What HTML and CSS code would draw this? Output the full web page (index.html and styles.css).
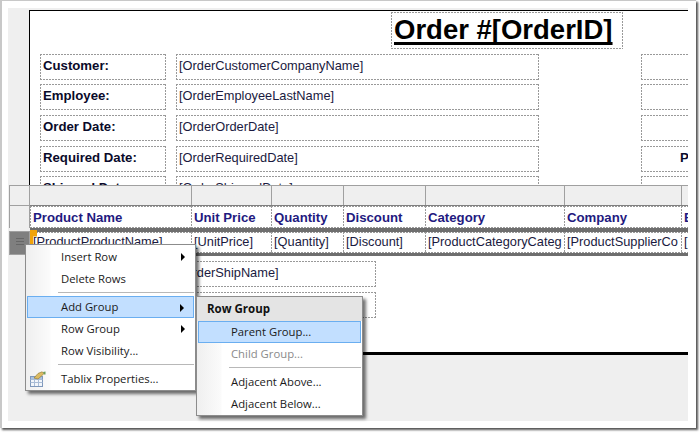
FILE: index.html
```html
<!DOCTYPE html>
<html lang="en">
<head>
<meta charset="utf-8">
<title>Order report designer</title>
<link rel="stylesheet" href="styles.css">
</head>
<body>
<div class="frame">
  <div class="canvas">
    <div class="page">
      <div class="title-row"><div class="title dash">Order #[OrderID]</div></div>
      <div class="fields">
        <div class="label dash">Customer:</div><div class="value dash">[OrderCustomerCompanyName]</div><div class="extra dash"></div>
        <div class="label dash">Employee:</div><div class="value dash">[OrderEmployeeLastName]</div><div class="extra dash"></div>
        <div class="label dash">Order Date:</div><div class="value dash">[OrderOrderDate]</div><div class="extra dash"></div>
        <div class="label dash">Required Date:</div><div class="value dash">[OrderRequiredDate]</div><div class="extra dash"><span class="clip-label">P</span></div>
        <div class="label dash">Shipped Date:</div><div class="value dash">[OrderShippedDate]</div><div class="extra dash"></div>
      </div>
      <div class="ship-fields">
        <div class="ship dash">[OrderShipName]</div>
        <div class="ship dash"></div>
      </div>
    </div>
  </div>

  <div class="tablix">
    <div class="t-row t-head">
      <div class="t-handle"></div>
      <div class="t-col c1"></div><div class="t-col c2"></div><div class="t-col c3"></div><div class="t-col c4"></div><div class="t-col c5"></div><div class="t-col c6"></div><div class="t-col c7"></div>
    </div>
    <div class="t-row t-titles">
      <div class="t-handle"></div>
      <div class="t-cell dash c1">Product Name</div><div class="t-cell dash c2">Unit Price</div><div class="t-cell dash c3">Quantity</div><div class="t-cell dash c4">Discount</div><div class="t-cell dash c5">Category</div><div class="t-cell dash c6">Company</div><div class="t-cell dash c7">E</div>
    </div>
    <div class="t-row t-data">
      <div class="t-handle selected"><span></span><span></span><span></span></div>
      <div class="t-band">
        <div class="t-cell dash c1">[ProductProductName]</div><div class="t-cell dash c2">[UnitPrice]</div><div class="t-cell dash c3">[Quantity]</div><div class="t-cell dash c4">[Discount]</div><div class="t-cell dash c5">[ProductCategoryCateg</div><div class="t-cell dash c6">[ProductSupplierCo</div><div class="t-cell dash c7">[</div>
      </div>
      <div class="marker"></div>
    </div>
  </div>

  <div class="menu menu-main">
    <div class="item arrow">Insert Row</div>
    <div class="item">Delete Rows</div>
    <div class="sep"></div>
    <div class="item arrow active">Add Group</div>
    <div class="item arrow">Row Group</div>
    <div class="item">Row Visibility...</div>
    <div class="sep"></div>
    <div class="item">
      <svg class="item-icon" viewBox="0 0 17 16" width="17" height="16" aria-hidden="true">
        <rect x="0.5" y="5.5" width="12" height="10" fill="#f2f6fb" stroke="#7f98bb"/>
        <rect x="1" y="6" width="11" height="2" fill="#a9c3e2"/>
        <path d="M0.5 8.5h12M0.5 11.5h12M4.5 6v9M8.5 6v9" stroke="#a9bcd6" fill="none"/>
        <path d="M4 7 8 2.5 12 0.8 14 2.5 11 5.5 8 8Z" fill="#dcbb62" stroke="#9a8038" stroke-width=".7"/>
        <path d="M13 1 15.5 0.5 15.5 3.5 14 3.5Z" fill="#6d9c58"/>
      </svg>
      Tablix Properties...
    </div>
  </div>

  <div class="menu menu-sub">
    <div class="menu-title">Row Group</div>
    <div class="item active">Parent Group...</div>
    <div class="item disabled">Child Group...</div>
    <div class="sep"></div>
    <div class="item">Adjacent Above...</div>
    <div class="item">Adjacent Below...</div>
  </div>
</div>
</body>
</html>
```
FILE: styles.css
```css
* { box-sizing: border-box; }
html, body { margin: 0; padding: 0; background: #fff; overflow: hidden; }
body { width: 700px; height: 433px; font-family: "Liberation Sans", Arial, sans-serif; }

.frame {
  position: relative;
  width: 696px;
  height: 428px;
  padding: 8px 8px 7px 8px;
  background: #fff;
  box-shadow: inset 2px 1px 0 #c8c8c8, 2px 2px 2px #555;
}
.canvas {
  height: 413px;
  padding: 2px 0 0 21px;
  background: #efefef;
}
.page {
  height: 345px;
  background: #fff;
  border-top: 1px solid #000;
  border-left: 1px solid #000;
  border-bottom: 3px solid #000;
  overflow: hidden;
}

.dash {
  background-image:
    repeating-linear-gradient(90deg, #999 0 2px, transparent 2px 3px),
    repeating-linear-gradient(90deg, #999 0 2px, transparent 2px 3px),
    repeating-linear-gradient(180deg, #999 0 2px, transparent 2px 3px),
    repeating-linear-gradient(180deg, #999 0 2px, transparent 2px 3px);
  background-size: 100% 1px, 100% 1px, 1px 100%, 1px 100%;
  background-position: left top, left bottom, left top, right top;
  background-repeat: no-repeat;
}

.title-row { padding: 1px 0 0 361px; height: 43px; }
.title {
  width: 232px;
  height: 37px;
  padding: 1px 0 0 3px;
  font-size: 27.5px;
  line-height: 33px;
  font-weight: 700;
  color: #000;
  text-decoration: underline;
  text-decoration-thickness: 3px;
  text-underline-offset: 3px;
  text-decoration-skip-ink: none;
  white-space: nowrap;
}

.fields {
  display: grid;
  grid-template-columns: 126px 363px 47px;
  column-gap: 10px;
  grid-template-rows: 25px 26px 26px 25px 26px;
  row-gap: 5px;
  padding-left: 10px;
  width: 680px;
}
.fields > * { height: 26px; }
.fields .extra { margin-left: 92px; width: 60px; }
.label, .value, .extra, .ship { padding-left: 3px; line-height: 24px; white-space: nowrap; overflow: hidden; }
.label { font-size: 13.2px; font-weight: 700; color: #0a0a2a; }
.value, .ship { font-size: 12.8px; color: #1a1a40; }
.clip-label { display: block; padding-left: 36px; font-size: 13.2px; font-weight: 700; color: #0a0a2a; }

.ship-fields {
  display: flex;
  flex-direction: column;
  gap: 5px;
  margin: 59px 0 0 146px;
  width: 200px;
}
.ship { height: 26px; line-height: 23px; }

.tablix {
  position: absolute;
  left: 9px;
  top: 185px;
  width: 679px;
  height: 71px;
  overflow: hidden;
}
.t-row { display: flex; position: relative; }
.t-handle {
  flex: 0 0 21px;
  background: #efefef;
  border: 1px solid #a0a0a0;
  border-width: 0 1px 0 1px;
}
.t-head { height: 21px; background: #efefef; }
.t-head .t-handle { border-width: 1px; }
.t-col {
  border: 1px solid #a0a0a0;
  border-left: 0;
  border-bottom-color: #808080;
  margin-right: -1px;
}
.c1 { flex: 0 0 162px; }
.c2 { flex: 0 0 81px; }
.c3 { flex: 0 0 73px; }
.c4 { flex: 0 0 83px; }
.c5 { flex: 0 0 140px; }
.c6 { flex: 0 0 118px; }
.c7 { flex: 0 0 30px; }

.t-titles { height: 22px; background: #fff; }
.t-titles .t-cell {
  margin-right: -1px;
  padding-left: 3px;
  font-size: 13.2px;
  font-weight: 700;
  line-height: 23px;
  color: #1f1a80;
  white-space: nowrap;
  overflow: hidden;
}
.t-data { height: 28px; background: linear-gradient(90deg, #efefef 21px, #fff 21px); }
.t-band {
  display: flex;
  flex: 1 1 auto;
  height: 28px;
  border-top: 4px solid #6e6e6e;
  border-bottom: 3px solid #6e6e6e;
}
.t-band .t-cell {
  margin-right: -1px;
  height: 21px;
  padding-left: 3px;
  font-size: 12.8px;
  line-height: 20px;
  color: #1a1a40;
  white-space: nowrap;
  overflow: hidden;
}
.t-handle.selected {
  height: 24px;
  margin-top: 3px;
  padding: 6px 5px 0 6px;
  background: #7f7f7f;
  border: 1px solid #a0a0a0;
  display: flex;
  flex-direction: column;
  gap: 2px;
}
.t-handle.selected span { display: block; height: 1px; background: #666; }
.marker {
  position: absolute;
  left: 21px;
  top: 2px;
  width: 7px;
  height: 16px;
  background: #f0a30a;
  clip-path: polygon(0 0, 100% 0, 100% 40%, 45% 40%, 45% 100%, 0 100%);
}

.menu {
  position: absolute;
  background: linear-gradient(90deg, #efefef, #fbfbfb 24px, #fff 25px);
  border: 1px solid #8c8c8c;
  box-shadow: 3px 3px 3px rgba(0, 0, 0, .55);
  font-family: "Open Sans", "Noto Sans", sans-serif;
  font-size: 11.3px;
  color: #1a1a1a;
}
.menu-main { left: 25px; top: 244px; width: 171px; height: 147px; padding: 1px; }
.menu-sub { left: 196px; top: 296px; width: 167px; height: 120px; padding: 0 1px; }
.item {
  position: relative;
  height: 22px;
  padding-left: 34px;
  line-height: 21px;
  white-space: nowrap;
}
.menu-sub .item { padding-left: 33px; }
.menu-sub .item.active { padding-left: 32px; }
.item.active {
  background: #c2dfff;
  border: 1px solid #6aaef0;
  line-height: 19px;
  padding-left: 33px;
}
.arrow::after {
  content: "";
  position: absolute;
  right: 9px;
  top: 7px;
  border-left: 4px solid #000;
  border-top: 4px solid transparent;
  border-bottom: 4px solid transparent;
}
.item.disabled { color: #8a8a8a; }
.sep { height: 6px; margin-left: 31px; position: relative; }
.sep::after { content: ""; position: absolute; left: 0; right: 0; top: 2px; height: 1px; background: #b8b8b8; }
.item-icon { position: absolute; left: 3px; top: 3px; }
.menu-title {
  height: 24px;
  margin: 0 -1px;
  padding-left: 10px;
  background: #e4e4e4;
  font-size: 11.5px;
  font-weight: 700;
  line-height: 23px;
  color: #111;
}
```
